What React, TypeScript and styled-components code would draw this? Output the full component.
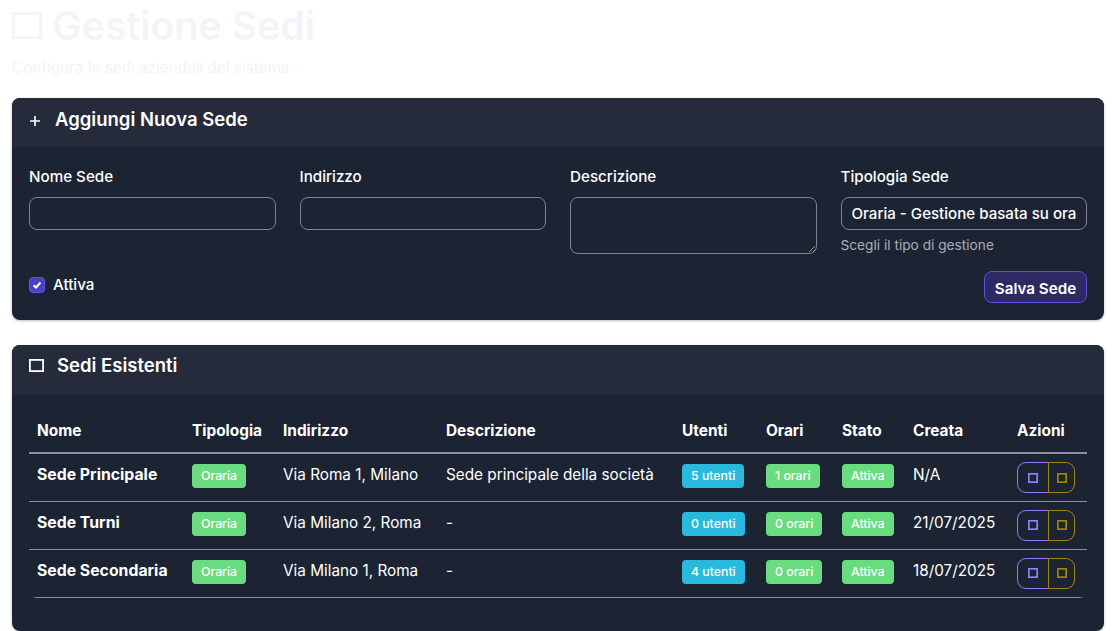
import styled, { createGlobalStyle } from "styled-components";

const sedi = [
	{ nome: "Sede Principale", indirizzo: "Via Roma 1, Milano", descrizione: "Sede principale della società", utenti: "5 utenti", orari: "1 orari", creata: "N/A" },
	{ nome: "Sede Turni", indirizzo: "Via Milano 2, Roma", descrizione: "-", utenti: "0 utenti", orari: "0 orari", creata: "21/07/2025" },
	{ nome: "Sede Secondaria", indirizzo: "Via Milano 1, Roma", descrizione: "-", utenti: "4 utenti", orari: "0 orari", creata: "18/07/2025" },
];

const columns = [
	{ label: "Nome", width: 155 },
	{ label: "Tipologia", width: 91 },
	{ label: "Indirizzo", width: 163 },
	{ label: "Descrizione", width: 236 },
	{ label: "Utenti", width: 84 },
	{ label: "Orari", width: 76 },
	{ label: "Stato", width: 71 },
	{ label: "Creata", width: 104 },
	{ label: "Azioni", width: 78 },
];

const GlobalStyle = createGlobalStyle`
	html, body {
		background: #ffffff;
		margin: 0;
		padding: 0;
	}
	body {
		font-family: "Inter", "Liberation Sans", sans-serif;
		-webkit-font-smoothing: antialiased;
	}
`;

const Page = styled.main`
	display: flex;
	flex-direction: column;
	height: 631px;
	overflow: hidden;
	padding: 0 12px;
	box-sizing: border-box;
`;

const PageHeader = styled.header`
	color: #f1f5f9;
	height: 98px;
	flex: none;
`;

const Title = styled.h1`
	align-items: center;
	display: flex;
	font-size: 39.3px;
	font-weight: 600;
	gap: 10px;
	height: 50px;
	margin: 0;
`;

const Subtitle = styled.p`
	font-size: 15.3px;
	line-height: 18px;
	margin: 9px 0 0;
`;

const Card = styled.section`
	background: #1c2333;
	border-radius: 8px;
	box-shadow: 0 1px 3px rgba(0, 0, 0, 0.25);
	color: #ffffff;
	flex: none;
	overflow: hidden;

	& + & {
		margin-top: 25px;
	}
`;

const CardHeader = styled.div<{ $bottom: number }>`
	align-items: center;
	background: #252b3b;
	box-sizing: border-box;
	display: flex;
	font-size: 18.5px;
	font-weight: 600;
	height: 49px;
	padding: 0 17px ${ ({ $bottom }) => $bottom }px;
`;

const CardBody = styled.div<{ $top: number }>`
	padding: ${ ({ $top }) => $top }px 17px 17px;
`;

const HeaderIcon = styled.svg<{ $gap: number; $shift?: number }>`
	display: block;
	flex: none;
	margin-right: ${ ({ $gap }) => $gap }px;
	margin-top: ${ ({ $shift }) => $shift || 0 }px;
`;

const FormGrid = styled.div`
	display: grid;
	gap: 24px;
	grid-template-columns: repeat(4, 1fr);
`;

const Field = styled.div`
	display: flex;
	flex-direction: column;
	min-width: 0;
`;

const Label = styled.label`
	font-size: 15.2px;
	font-weight: 500;
	line-height: 20px;
	margin: 3px 0 10px;
`;

const controlStyles = `
	background: transparent;
	border: 1px solid #7c8392;
	border-radius: 8px;
	box-sizing: border-box;
	color: #ffffff;
	font-family: inherit;
	font-size: 15.1px;
	font-weight: 500;
	width: 100%;
`;

const Input = styled.input`
	${ controlStyles };
	display: block;
	height: 33px;
	padding: 0 10px;
`;

const TextArea = styled.textarea`
	${ controlStyles };
	display: block;
	height: 57px;
	padding: 6px 10px;
`;

const Select = styled.select`
	${ controlStyles };
	appearance: none;
	display: block;
	height: 33px;
	padding: 0 10px;
`;

const Help = styled.small`
	color: #a9aeb8;
	font-size: 13.7px;
	line-height: 16px;
	margin-top: 7px;
`;

const FormFooter = styled.div`
	align-items: flex-start;
	display: flex;
	justify-content: space-between;
	margin-top: 17px;
`;

const CheckRow = styled.label`
	align-items: center;
	display: flex;
	font-size: 15.2px;
	font-weight: 500;
	gap: 8px;
	margin-top: 4px;
`;

const CheckBox = styled.span`
	align-items: center;
	background: #4a40c4;
	border: 1px solid #6257e0;
	border-radius: 4px;
	box-sizing: border-box;
	display: flex;
	height: 16px;
	justify-content: center;
	width: 16px;
`;

const SaveButton = styled.button`
	background: #2d2a63;
	border: 1px solid #5b50e0;
	border-radius: 8px;
	color: #ffffff;
	font-family: inherit;
	font-size: 15.2px;
	font-weight: 600;
	height: 32px;
	padding: 2px 0 0;
	width: 103px;
`;

const TableWrap = styled.div`
	border-radius: 8px;
	margin-bottom: 16px;
	overflow: hidden;
`;

const Table = styled.table`
	border-collapse: collapse;
	table-layout: fixed;
	width: 1058px;
`;

const HeadCell = styled.th<{ $width: number }>`
	border-bottom: 2px solid #8a90a0;
	box-sizing: border-box;
	font-size: 15.4px;
	font-weight: 700;
	height: 44px;
	padding: 0 8px;
	text-align: left;
	width: ${ ({ $width }) => $width }px;
`;

const Cell = styled.td<{ $strong?: boolean }>`
	border-bottom: 1px solid #8a90a0;
	box-sizing: border-box;
	font-size: ${ ({ $strong }) => $strong ? 15.8 : 15.3 }px;
	font-weight: ${ ({ $strong }) => $strong ? 700 : 400 };
	height: 48px;
	line-height: 20px;
	padding: 11px 8px 0;
	vertical-align: top;
	white-space: nowrap;
`;

const Badge = styled.span<{ $colour: string }>`
	background: ${ ({ $colour }) => $colour };
	border-radius: 4px;
	color: #ffffff;
	display: inline-block;
	font-size: 12.3px;
	font-weight: 550;
	line-height: 24px;
	margin-top: -1px;
	padding: 0 9px;
	vertical-align: top;
`;

const ActionGroup = styled.div`
	display: flex;
	height: 31px;
	margin-top: -3px;
	width: 58px;
`;

const ActionButton = styled.button<{ $colour: string; $side: "left" | "right" }>`
	align-items: center;
	background: transparent;
	border: 1px solid ${ ({ $colour }) => $colour };
	border-radius: ${ ({ $side }) => $side === "left" ? "9px 0 0 9px" : "0 9px 9px 0" };
	border-left-width: ${ ({ $side }) => $side === "left" ? 1 : 0 }px;
	box-sizing: border-box;
	color: ${ ({ $colour }) => $colour };
	display: flex;
	flex: 0 0 ${ ({ $side }) => $side === "left" ? 32 : 26 }px;
	justify-content: center;
	padding: 0;
	position: relative;

	&::after {
		border-right: 1px solid #a08600;
		bottom: -1px;
		content: "";
		display: ${ ({ $side }) => $side === "left" ? "block" : "none" };
		position: absolute;
		right: -1px;
		top: -1px;
	}
`;

const SquareIcon = ({ width, height = width, stroke, gap = 0 }: { width: number; height?: number; stroke: number; gap?: number }) => (
	<HeaderIcon $gap={ gap } width={ width } height={ height } viewBox={ `0 0 ${ width } ${ height }` } fill="none">
		<rect x={ stroke / 2 } y={ stroke / 2 } width={ width - stroke } height={ height - stroke } stroke="currentColor" strokeWidth={ stroke } />
	</HeaderIcon>
);

const App = () => {
	return(
		<Page>
			<GlobalStyle />
			<PageHeader>
				<Title>
					<SquareIcon width={ 30 } height={ 27 } stroke={ 2.8 } />
					{ "Gestione Sedi" }
				</Title>
				<Subtitle>{ "Configura le sedi aziendali del sistema" }</Subtitle>
			</PageHeader>

			<Card>
				<CardHeader $bottom={ 7 }>
					<HeaderIcon $gap={ 14 } $shift={ 3 } width={ 12 } height={ 12 } viewBox="0 0 12 12" fill="none">
						<path d="M6 1v10M1 6h10" stroke="currentColor" strokeWidth="1.6" />
					</HeaderIcon>
					{ "Aggiungi Nuova Sede" }
				</CardHeader>
				<CardBody $top={ 17 }>
					<FormGrid>
						<Field>
							<Label>{ "Nome Sede" }</Label>
							<Input type="text" />
						</Field>
						<Field>
							<Label>{ "Indirizzo" }</Label>
							<Input type="text" />
						</Field>
						<Field>
							<Label>{ "Descrizione" }</Label>
							<TextArea />
						</Field>
						<Field>
							<Label>{ "Tipologia Sede" }</Label>
							<Select defaultValue="oraria">
								<option value="oraria">{ "Oraria - Gestione basata su orari" }</option>
							</Select>
							<Help>{ "Scegli il tipo di gestione" }</Help>
						</Field>
					</FormGrid>
					<FormFooter>
						<CheckRow>
							<CheckBox>
								<svg width="10" height="10" viewBox="0 0 10 10" fill="none">
									<path d="M1.5 5.2 4 7.5 8.5 2.5" stroke="#ffffff" strokeWidth="2" />
								</svg>
							</CheckBox>
							{ "Attiva" }
						</CheckRow>
						<SaveButton type="button">{ "Salva Sede" }</SaveButton>
					</FormFooter>
				</CardBody>
			</Card>

			<Card>
				<CardHeader $bottom={ 9 }>
					<SquareIcon width={ 15 } height={ 13 } stroke={ 1.8 } gap={ 13 } />
					{ "Sedi Esistenti" }
				</CardHeader>
				<CardBody $top={ 15 }>
					<TableWrap>
						<Table>
							<thead>
								<tr>
									{ columns.map(column => (
										<HeadCell $width={ column.width } key={ column.label }>{ column.label }</HeadCell>
									)) }
								</tr>
							</thead>
							<tbody>
								{ sedi.map(sede => (
									<tr key={ sede.nome }>
										<Cell $strong>{ sede.nome }</Cell>
										<Cell><Badge $colour="#6bdb7f">{ "Oraria" }</Badge></Cell>
										<Cell>{ sede.indirizzo }</Cell>
										<Cell>{ sede.descrizione }</Cell>
										<Cell><Badge $colour="#29b9da">{ sede.utenti }</Badge></Cell>
										<Cell><Badge $colour="#6bdb7f">{ sede.orari }</Badge></Cell>
										<Cell><Badge $colour="#6bdb7f">{ "Attiva" }</Badge></Cell>
										<Cell>{ sede.creata }</Cell>
										<Cell>
											<ActionGroup>
												<ActionButton $colour="#8f80f5" $side="left" type="button">
													<SquareIcon width={ 10 } stroke={ 1.7 } />
												</ActionButton>
												<ActionButton $colour="#a08600" $side="right" type="button">
													<SquareIcon width={ 10 } stroke={ 1.7 } />
												</ActionButton>
											</ActionGroup>
										</Cell>
									</tr>
								)) }
							</tbody>
						</Table>
					</TableWrap>
				</CardBody>
			</Card>
		</Page>
	);
};

export default App;
